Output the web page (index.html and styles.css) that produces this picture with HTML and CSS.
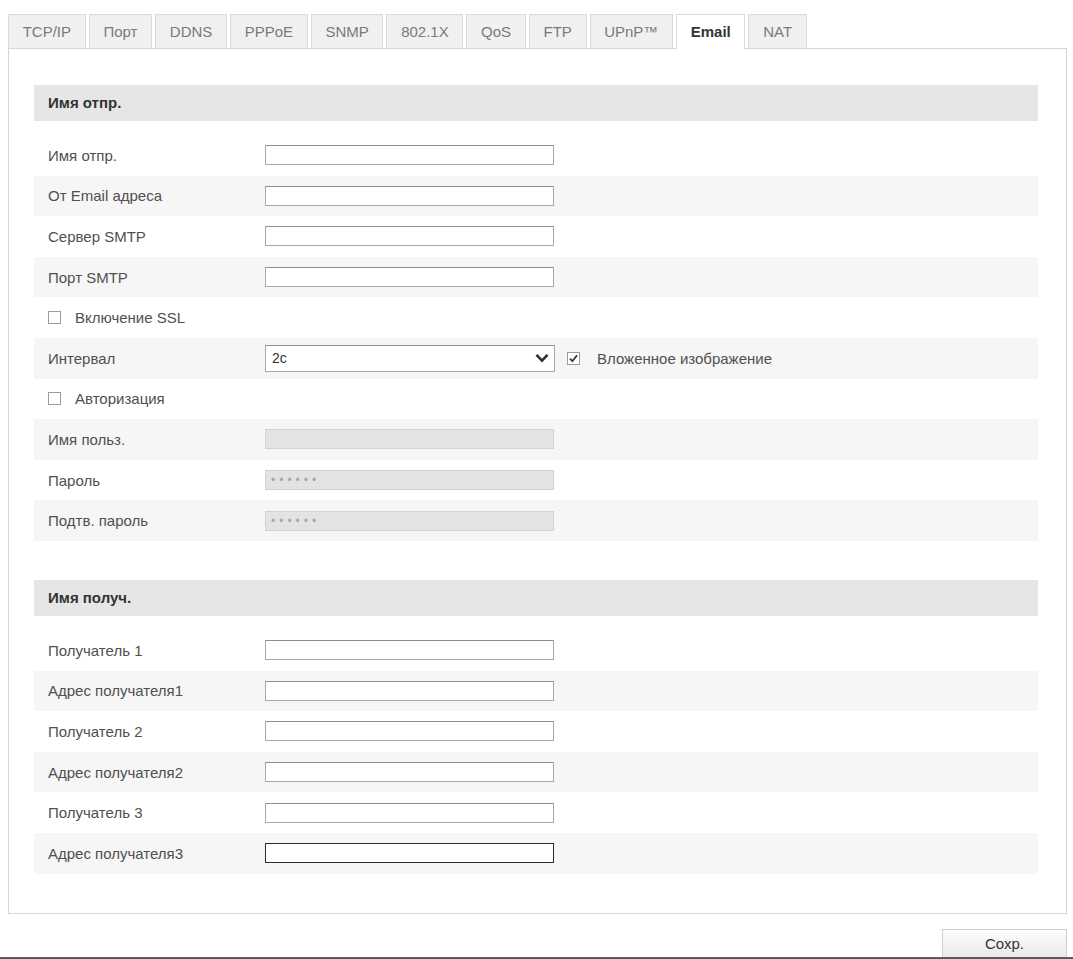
FILE: index.html
```html
<!DOCTYPE html>
<html lang="ru">
<head>
<meta charset="utf-8">
<title>Email</title>
<link rel="stylesheet" href="styles.css">
</head>
<body>
<div class="page">
  <nav class="tabs">
    <span class="tab">TCP/IP</span>
    <span class="tab">Порт</span>
    <span class="tab">DDNS</span>
    <span class="tab">PPPoE</span>
    <span class="tab">SNMP</span>
    <span class="tab">802.1X</span>
    <span class="tab">QoS</span>
    <span class="tab">FTP</span>
    <span class="tab">UPnP™</span>
    <span class="tab tab-active">Email</span>
    <span class="tab">NAT</span>
  </nav>

  <div class="panel">
    <section class="group">
      <div class="group-title">Имя отпр.</div>
      <div class="rows">
        <div class="row"><span class="label">Имя отпр.</span><input class="field" type="text"></div>
        <div class="row"><span class="label">От Email адреса</span><input class="field" type="text"></div>
        <div class="row"><span class="label">Сервер SMTP</span><input class="field" type="text"></div>
        <div class="row"><span class="label">Порт SMTP</span><input class="field" type="text"></div>
        <div class="row"><span class="check"></span><span class="check-label">Включение SSL</span></div>
        <div class="row">
          <span class="label">Интервал</span>
          <div class="select">
            <span>2с</span>
            <svg class="chevron" width="14" height="10" viewBox="0 0 14 10"><path d="M1.5 1.8 L7 7.6 L12.5 1.8" fill="none" stroke="#2f2f2f" stroke-width="2.6" stroke-linejoin="miter"/></svg>
          </div>
          <span class="check check-on"><svg width="11" height="11" viewBox="0 0 11 11"><path d="M2 5.6 L4.4 8.2 L9 2.4" fill="none" stroke="#3a3a3a" stroke-width="1.8"/></svg></span>
          <span class="check-label check-label-wide">Вложенное изображение</span>
        </div>
        <div class="row"><span class="check"></span><span class="check-label">Авторизация</span></div>
        <div class="row"><span class="label">Имя польз.</span><input class="field field-disabled" type="text" disabled></div>
        <div class="row"><span class="label">Пароль</span><input class="field field-disabled field-secret" type="password" value="123456" disabled></div>
        <div class="row"><span class="label">Подтв. пароль</span><input class="field field-disabled field-secret" type="password" value="123456" disabled></div>
      </div>
    </section>

    <section class="group">
      <div class="group-title">Имя получ.</div>
      <div class="rows">
        <div class="row"><span class="label">Получатель 1</span><input class="field" type="text"></div>
        <div class="row"><span class="label">Адрес получателя1</span><input class="field" type="text"></div>
        <div class="row"><span class="label">Получатель 2</span><input class="field" type="text"></div>
        <div class="row"><span class="label">Адрес получателя2</span><input class="field" type="text"></div>
        <div class="row"><span class="label">Получатель 3</span><input class="field" type="text"></div>
        <div class="row"><span class="label">Адрес получателя3</span><input class="field field-focus" type="text"></div>
      </div>
    </section>
  </div>

  <div class="actions">
    <button class="save" type="button">Сохр.</button>
  </div>
</div>
<div class="bottom-bar"></div>
</body>
</html>
```

FILE: styles.css
```css
html, body {
  margin: 0;
  background: #fff;
}

body {
  font-family: "Liberation Sans", Arial, sans-serif;
  font-size: 15px;
  color: #505050;
}

.page {
  padding: 14px 6px 0 8px;
}

/* tab strip */
.tabs {
  display: flex;
  align-items: flex-end;
  gap: 3px;
  height: 34px;
}

.tab {
  height: 33px;
  line-height: 34px;
  padding: 0 13.7px;
  border: 1px solid #dadada;
  border-bottom: none;
  background: #f0f0f0;
  color: #7a7a7a;
  white-space: nowrap;
}

.tab-active {
  position: relative;
  z-index: 1;
  height: 34px;
  margin-bottom: -1px;
  background: #fff;
  color: #333;
  font-weight: bold;
}

/* settings panel */
.panel {
  border: 1px solid #d6d6d6;
  padding: 36px 28px 39px 25px;
}

.group + .group {
  margin-top: 39px;
}

.group-title {
  height: 36px;
  line-height: 36px;
  padding-left: 14px;
  background: #e6e6e6;
  color: #333;
  font-weight: bold;
}

.rows {
  margin-top: 14px;
}

.row {
  display: flex;
  align-items: center;
  height: 40.6px;
  padding-left: 14px;
}

.row:nth-child(even) {
  background: #f6f6f6;
}

.label {
  flex: none;
  width: 217px;
}

.field {
  box-sizing: border-box;
  width: 289px;
  height: 20px;
  margin: 0;
  padding: 0 4px;
  border: 1px solid #a8a8a8;
  border-top-color: #8e8e8e;
  background: #fff;
  font: inherit;
  outline: none;
}

.field-disabled {
  background: #e3e3e3;
  border-color: #d3d3d3;
}

.field-secret {
  font-size: 12px;
  letter-spacing: 4px;
  color: #a9a9a9;
  padding-left: 5px;
}

.field-focus {
  border-color: #2b2b2b;
}

/* drop-down */
.select {
  box-sizing: border-box;
  display: flex;
  align-items: center;
  justify-content: space-between;
  width: 290px;
  height: 27px;
  padding: 0 5px 0 6px;
  border: 1px solid #a8a8a8;
  border-top-color: #8e8e8e;
  background: #fff;
  color: #333;
  font-size: 14px;
}

.chevron {
  display: block;
}

/* check boxes */
.check {
  box-sizing: border-box;
  flex: none;
  display: flex;
  align-items: center;
  justify-content: center;
  width: 13px;
  height: 13px;
  border: 1px solid #9c9c9c;
  background: #fff;
}

.check-on {
  margin-left: 12px;
}

.check-label {
  margin-left: 14px;
}

.check-label-wide {
  margin-left: 17px;
}

/* footer */
.actions {
  display: flex;
  justify-content: flex-end;
  margin-top: 15px;
}

.save {
  width: 125px;
  height: 28px;
  margin: 0;
  border: 1px solid #cfcfcf;
  border-bottom: none;
  background: linear-gradient(#fdfdfd, #e9e9e9);
  color: #333;
  font: inherit;
}

.bottom-bar {
  height: 3px;
  background: linear-gradient(#6a6a6a, #3c3c3c);
}
```
